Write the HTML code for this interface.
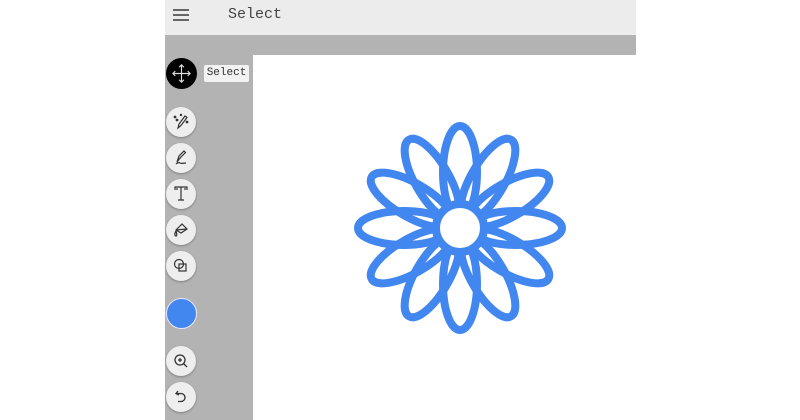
<!DOCTYPE html>
<html><head><style>
body{margin:0;width:800px;height:420px;background:#fff;position:relative;overflow:hidden;font-family:"Liberation Mono",monospace}
.top{position:absolute;left:165px;top:0;width:471px;height:35px;background:#ececec}
.gray{position:absolute;left:165px;top:35px;width:471px;height:385px;background:#b3b3b3}
.canvas{position:absolute;left:253px;top:55px;width:383px;height:365px;background:#fff}
.btn{position:absolute;left:166px;width:30px;height:30px;border-radius:50%;background:#eeeeee;box-shadow:0 1px 2px rgba(0,0,0,.3)}
.btn svg{position:absolute;left:6px;top:6px}
</style></head><body>
<div class="top"></div>
<div style="position:absolute;left:173px;top:9px;width:16px;height:2px;background:#666;box-shadow:0 5px 0 #666,0 10px 0 #666"></div>
<div style="position:absolute;left:228px;top:6px;font-size:15px;color:#444">Select</div>
<div class="gray"></div>
<div class="canvas"></div>
<div style="position:absolute;left:166px;top:58px;width:31px;height:31px;border-radius:50%;background:#000"></div>
<svg style="position:absolute;left:170px;top:62px" width="23" height="23" viewBox="0 0 24 24" fill="none" stroke="#ddd" stroke-width="1.2"><path d="M12 3v18M3 12h18M9.5 5.5L12 3l2.5 2.5M9.5 18.5L12 21l2.5-2.5M5.5 9.5L3 12l2.5 2.5M18.5 9.5L21 12l-2.5 2.5"/></svg>
<div style="position:absolute;left:204px;top:65px;width:45px;height:17px;background:#f2f2f2;border-radius:2px;font-size:11px;line-height:17px;text-align:center;color:#333">Select</div>
<div class="btn" style="top:107px"><svg width="18" height="18" viewBox="0 0 18 18" fill="none" stroke="#333" stroke-width="1.2"><path d="M6 15l1-4 6-8 2 1.5-6 8z"/><circle cx="3" cy="4" r=".8" fill="#333"/><circle cx="5" cy="7" r=".8" fill="#333"/><circle cx="15" cy="9" r=".8" fill="#333"/><circle cx="9" cy="2" r=".6" fill="#333"/></svg></div>
<div class="btn" style="top:143px"><svg width="18" height="18" viewBox="0 0 18 18" fill="none" stroke="#333" stroke-width="1.2"><path d="M5 13l2-6 5-5 1.5 1.5-5 5zM4 15c1-1 3-2 4-1s3 0 6 0"/></svg></div>
<div class="btn" style="top:179px"><svg width="18" height="18" viewBox="0 0 18 18" fill="none" stroke="#333" stroke-width="1.2"><path d="M3 5V2h12v3M9 2v13M6 15h6M5 3v2M13 3v2"/></svg></div>
<div class="btn" style="top:215px"><svg width="18" height="18" viewBox="0 0 18 18" fill="none" stroke="#333" stroke-width="1.2"><path d="M4 9l6-6 5 5-6 4z"/><path d="M4 9l11-1" /><path d="M4 10c-2 3-1 5 0 5s1-2 0-5"/></svg></div>
<div class="btn" style="top:251px"><svg width="18" height="18" viewBox="0 0 18 18" fill="none" stroke="#333" stroke-width="1.2"><circle cx="7" cy="7" r="4.5"/><rect x="7" y="7" width="7" height="7"/></svg></div>
<div style="position:absolute;left:166px;top:298px;width:29px;height:29px;border-radius:50%;background:#4287f0;border:1.5px solid #e8e8ff"></div>
<div class="btn" style="top:346px"><svg width="18" height="18" viewBox="0 0 18 18" fill="none" stroke="#333" stroke-width="1.3"><circle cx="8" cy="8" r="5"/><path d="M11.5 11.5L15 15M8 6v4M6 8h4"/></svg></div>
<div class="btn" style="top:382px"><svg width="18" height="18" viewBox="0 0 18 18" fill="none" stroke="#333" stroke-width="1.3"><path d="M6 3L4 5.5 7 7M4.5 5.5H9a4 4 0 010 8H6"/></svg></div>
<svg style="position:absolute;left:0;top:0" width="800" height="420">
<g transform="translate(460,228)" fill="none" stroke="#4287f0" stroke-width="8">
<g id="p"><ellipse cx="0" cy="-56" rx="17" ry="46"/></g>
<use href="#p" transform="rotate(30)"/><use href="#p" transform="rotate(60)"/><use href="#p" transform="rotate(90)"/>
<use href="#p" transform="rotate(120)"/><use href="#p" transform="rotate(150)"/><use href="#p" transform="rotate(180)"/>
<use href="#p" transform="rotate(210)"/><use href="#p" transform="rotate(240)"/><use href="#p" transform="rotate(270)"/>
<use href="#p" transform="rotate(300)"/><use href="#p" transform="rotate(330)"/>
<circle r="24" fill="#fff"/>
</g></svg>
</body></html>
